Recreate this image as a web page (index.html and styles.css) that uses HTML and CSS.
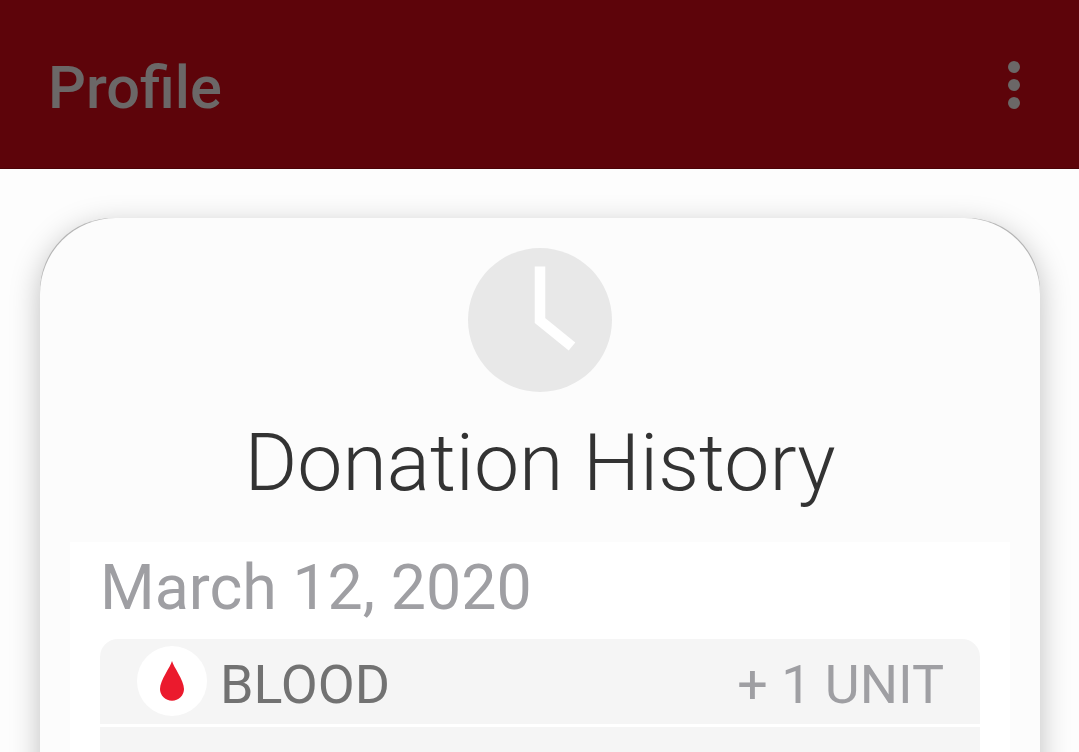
FILE: index.html
```html
<!DOCTYPE html>
<html lang="en">
<head>
    <meta charset="UTF-8">
    <meta name="viewport" content="width=device-width, initial-scale=1.0">
    <title>Profile</title>
    <link rel="stylesheet" href="styles.css">
</head>
<body>
    <header class="app-bar">
        <h1 class="app-title">Profile</h1>
        <button class="menu-button" aria-label="More options">
            <span class="dot"></span>
            <span class="dot"></span>
            <span class="dot"></span>
        </button>
    </header>

    <main class="card-shadow">
        <div class="history-card">
            <svg class="clock-icon" viewBox="0 0 144 144">
                <circle cx="72" cy="72" r="72" fill="#e8e8e8"/>
                <path d="M72 18.500V72.500L104 98.500" fill="none" stroke="#fff" stroke-width="10.500"/>
            </svg>
            <h2 class="history-title">Donation History</h2>

            <!-- Donations grouped by date -->
            <section class="history-list">
                <h3 class="donation-date">March 12, 2020</h3>
                <div class="donation-row first">
                    <div class="donation-icon">
                        <svg class="drop-icon" viewBox="0 0 24 40">
                            <path d="M12 0C13.500 6 24 19 24 28A12 11.700 0 0 1 0 28C0 19 10.500 6 12 0Z" fill="#eb1a2d"/>
                        </svg>
                    </div>
                    <span class="donation-type">BLOOD</span>
                    <span class="donation-amount">+ 1 UNIT</span>
                </div>
                <div class="donation-row"></div>
            </section>
        </div>
    </main>
</body>
</html>
```
FILE: styles.css
```css
* {
    box-sizing: border-box;
}

body {
    font-family: Roboto, sans-serif;
    margin: 0;
    height: 752px;
    overflow: hidden;
    background-color: #fdfdfd;
}

h1, h2, h3 {
    margin: 0;
}

.app-bar {
    display: flex;
    align-items: center;
    justify-content: space-between;
    height: 169px;
    padding: 2px 59px 0 48px;
    background-color: #5d040a;
    border-bottom: 1px solid #4c0308;
}

.app-title {
    padding-top: 6px;
    font-size: 59.5px;
    font-weight: 500;
    line-height: 70px;
    color: #6b6767;
}

.menu-button {
    display: flex;
    flex-direction: column;
    gap: 6px;
    padding: 0;
    border: none;
    background: none;
    cursor: pointer;
}

.dot {
    width: 12px;
    height: 12px;
    border-radius: 50%;
    background-color: #6b6767;
}

/* Slightly tighter radius than the card, leaves a thin line on the corners */
.card-shadow {
    width: 1000px;
    margin: 49px 0 0 40px;
    border-radius: 73px 73px 0 0;
    background-color: #b4b4b4;
    box-shadow: 0 8px 30px rgba(0, 0, 0, 0.25);
}

.history-card {
    display: flex;
    flex-direction: column;
    align-items: center;
    padding: 30px 30px 0;
    border-radius: 76px 76px 0 0;
    background-color: #fcfcfc;
}

.clock-icon {
    flex-shrink: 0;
    width: 144px;
    height: 144px;
}

.history-title {
    margin-top: 23px;
    font-size: 80.6px;
    font-weight: 300;
    line-height: 96px;
    white-space: nowrap;
    color: #333;
}

.history-list {
    width: 940px;
    margin-top: 31px;
    padding: 8px 30px 0;
    background-color: #fff;
}

.donation-date {
    margin-bottom: 14px;
    font-size: 62.7px;
    font-weight: 400;
    line-height: 75px;
    color: #9f9fa3;
}

.donation-row {
    display: flex;
    align-items: center;
    height: 85px;
    margin-bottom: 3px;
    padding: 0 36px 0 37px;
    background-color: #f5f5f5;
}

.donation-row.first {
    border-radius: 18px 18px 0 0;
}

.donation-icon {
    display: flex;
    align-items: center;
    justify-content: center;
    width: 70px;
    height: 70px;
    margin: 0 13px 2px 0;
    border-radius: 50%;
    background-color: #fff;
}

.drop-icon {
    width: 24px;
    height: 40px;
}

.donation-type,
.donation-amount {
    padding-top: 6px;
    font-size: 53.8px;
    line-height: 64px;
}

.donation-type {
    color: #727272;
}

.donation-amount {
    margin-left: auto;
    color: #9f9fa3;
}
```
